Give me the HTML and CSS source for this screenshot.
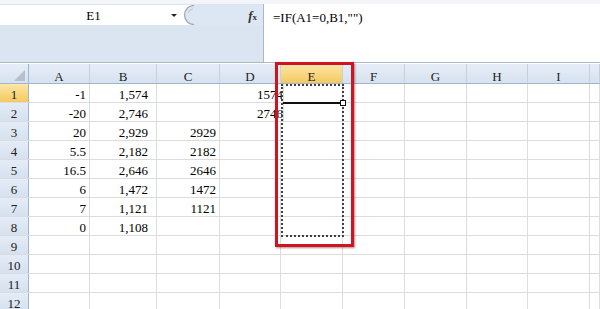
FILE: index.html
```html
<!DOCTYPE html>
<html>
<head>
    <title>E1 formula</title>
    <link rel="stylesheet" href="styles.css">
</head>
<body>
    <div id="formula-bar">
        <div class="bar-left">
            <div class="name-row">
                <div class="name-box">
                    <span class="cell-ref">E1</span>
                    <span class="drop-arrow"></span>
                </div>
                <svg class="grip" width="14" height="20" viewBox="0 0 14 20">
                    <rect x="0" y="0" width="14" height="20" fill="#fff"/>
                    <path d="M14 0 L11 0 A10 10 0 0 0 11 20 L14 20 Z" fill="#dde7f3"/>
                    <path d="M11 0.5 A9.5 9.5 0 0 0 11 19.5" fill="none" stroke="#a3a9b1" stroke-width="1.2"/>
                    <path d="M10 4 A6 6 0 0 0 5 8" fill="none" stroke="#bcc3cc" stroke-width="1"/>
                </svg>
                <div class="fx"><i>f</i><span>x</span></div>
            </div>
        </div>
        <div class="formula">=IF(A1=0,B1,"")</div>
    </div>

    <div id="sheet">
        <div class="row head">
            <div class="corner"><span class="tri"></span></div>
            <div>A</div><div>B</div><div>C</div><div>D</div>
            <div class="picked">E</div>
            <div>F</div><div>G</div><div>H</div><div>I</div><div></div>
        </div>
        <div class="row">
            <div class="num picked">1</div>
            <div>-1</div><div class="comma">1,574</div><div></div><div class="clip">1574</div>
            <div></div><div></div><div></div><div></div><div></div><div></div>
        </div>
        <div class="row">
            <div class="num">2</div>
            <div>-20</div><div class="comma">2,746</div><div></div><div class="clip">2746</div>
            <div></div><div></div><div></div><div></div><div></div><div></div>
        </div>
        <div class="row">
            <div class="num">3</div>
            <div>20</div><div class="comma">2,929</div><div>2929</div><div></div>
            <div></div><div></div><div></div><div></div><div></div><div></div>
        </div>
        <div class="row">
            <div class="num">4</div>
            <div>5.5</div><div class="comma">2,182</div><div>2182</div><div></div>
            <div></div><div></div><div></div><div></div><div></div><div></div>
        </div>
        <div class="row">
            <div class="num">5</div>
            <div>16.5</div><div class="comma">2,646</div><div>2646</div><div></div>
            <div></div><div></div><div></div><div></div><div></div><div></div>
        </div>
        <div class="row">
            <div class="num">6</div>
            <div>6</div><div class="comma">1,472</div><div>1472</div><div></div>
            <div></div><div></div><div></div><div></div><div></div><div></div>
        </div>
        <div class="row">
            <div class="num">7</div>
            <div>7</div><div class="comma">1,121</div><div>1121</div><div></div>
            <div></div><div></div><div></div><div></div><div></div><div></div>
        </div>
        <div class="row">
            <div class="num">8</div>
            <div>0</div><div class="comma">1,108</div><div></div><div></div>
            <div></div><div></div><div></div><div></div><div></div><div></div>
        </div>
        <div class="row">
            <div class="num">9</div>
            <div></div><div></div><div></div><div></div>
            <div></div><div></div><div></div><div></div><div></div><div></div>
        </div>
        <div class="row">
            <div class="num">10</div>
            <div></div><div></div><div></div><div></div>
            <div></div><div></div><div></div><div></div><div></div><div></div>
        </div>
        <div class="row">
            <div class="num">11</div>
            <div></div><div></div><div></div><div></div>
            <div></div><div></div><div></div><div></div><div></div><div></div>
        </div>
        <div class="row">
            <div class="num">12</div>
            <div></div><div></div><div></div><div></div>
            <div></div><div></div><div></div><div></div><div></div><div></div>
        </div>
    </div>

    <!-- marks drawn over the grid -->
    <div class="ants"></div>
    <div class="active-edge"><span class="handle"></span></div>
    <div class="red-box"></div>
</body>
</html>
```

FILE: styles.css
```css
body {
    margin: 0;
    width: 600px;
    height: 309px;
    overflow: hidden;
    position: relative;
    font-family: "Liberation Serif", "DejaVu Serif", serif;
    font-size: 13px;
    color: #000;
    background: #fff;
}

#formula-bar {
    display: flex;
    height: 63px;
    box-sizing: border-box;
    border-top: 4px solid #f3f5f9;
    border-bottom: 1px solid #abb8c9;
    box-shadow: inset 0 1px 0 #b4c0cf;
}

.bar-left {
    width: 263px;
    background: #dbe5f1;
    border-right: 1px solid #a9b7c9;
    padding-top: 1px;
}

.name-row {
    display: flex;
    height: 20px;
    align-items: center;
}

.name-box {
    width: 183px;
    height: 20px;
    background: #fff;
    display: flex;
    align-items: center;
    justify-content: center;
    position: relative;
}

.cell-ref {
    padding-left: 4px;
    padding-top: 2px;
}

.drop-arrow {
    position: absolute;
    right: 6px;
    top: 9px;
    border-left: 3px solid transparent;
    border-right: 3px solid transparent;
    border-top: 3px solid #222;
}

.grip {
    display: block;
}

.fx {
    flex: 1;
    height: 20px;
    background: #dde7f3;
    text-align: right;
    padding-right: 6px;
    line-height: 22px;
    color: #333;
}

.fx i {
    font-weight: bold;
    font-size: 13px;
}

.fx span {
    font-size: 9px;
    font-weight: bold;
}

.formula {
    flex: 1;
    background: #fff;
    padding: 6px 0 0 9px;
}

.row {
    display: grid;
    grid-template-columns: 29px 61px 67px 63px 61px 62px 62px 62px 61px 62px 1fr;
    height: 19px;
    box-sizing: border-box;
    border-bottom: 1px solid #dadcdd;
}

.row > div {
    box-sizing: border-box;
    border-right: 1px solid #dadcdd;
    text-align: right;
    padding: 3px 3px 0 0;
    line-height: 15px;
    white-space: nowrap;
    overflow: hidden;
}

.row > .comma {
    padding-right: 8px;
}

.row > .clip {
    padding-right: 0;
    margin-right: -3px;
}

.row.head {
    height: 21px;
    border-top: 1px solid #fff;
    border-bottom: 1px solid #9eb6ce;
    background: linear-gradient(#e6edf7, #d7e2f0);
}

.row.head > div {
    text-align: center;
    padding: 5px 0 0;
    border-right: 1px solid #c3d0e0;
    color: #222;
}

.row > .num {
    text-align: center;
    padding: 3px 0 0;
    background: linear-gradient(#e4ecf7, #d6e1ef);
    border-right: 1px solid #9eb6ce;
    color: #222;
}

.row > .picked {
    background: linear-gradient(#fbe7a8, #f5c95f);
}

.row.head > .corner {
    position: relative;
    border-right: 1px solid #9eb6ce;
}

.tri {
    position: absolute;
    right: 3px;
    bottom: 2px;
    border-left: 11px solid transparent;
    border-bottom: 11px solid #b6bfcb;
}

.ants {
    position: absolute;
    left: 281px;
    top: 84px;
    width: 63px;
    height: 153px;
    box-sizing: border-box;
    border: 2px dotted #3f3f48;
}

.active-edge {
    position: absolute;
    left: 283px;
    top: 102px;
    width: 60px;
    height: 2px;
    background: #111;
}

.handle {
    position: absolute;
    right: -3px;
    top: -2px;
    width: 4px;
    height: 4px;
    background: #fff;
    border: 1px solid #111;
}

.red-box {
    position: absolute;
    left: 275px;
    top: 62px;
    width: 79px;
    height: 185px;
    box-sizing: border-box;
    border: 3px solid #cc1520;
    box-shadow: 1px 1px 2px rgba(80, 0, 0, 0.45);
}
```
